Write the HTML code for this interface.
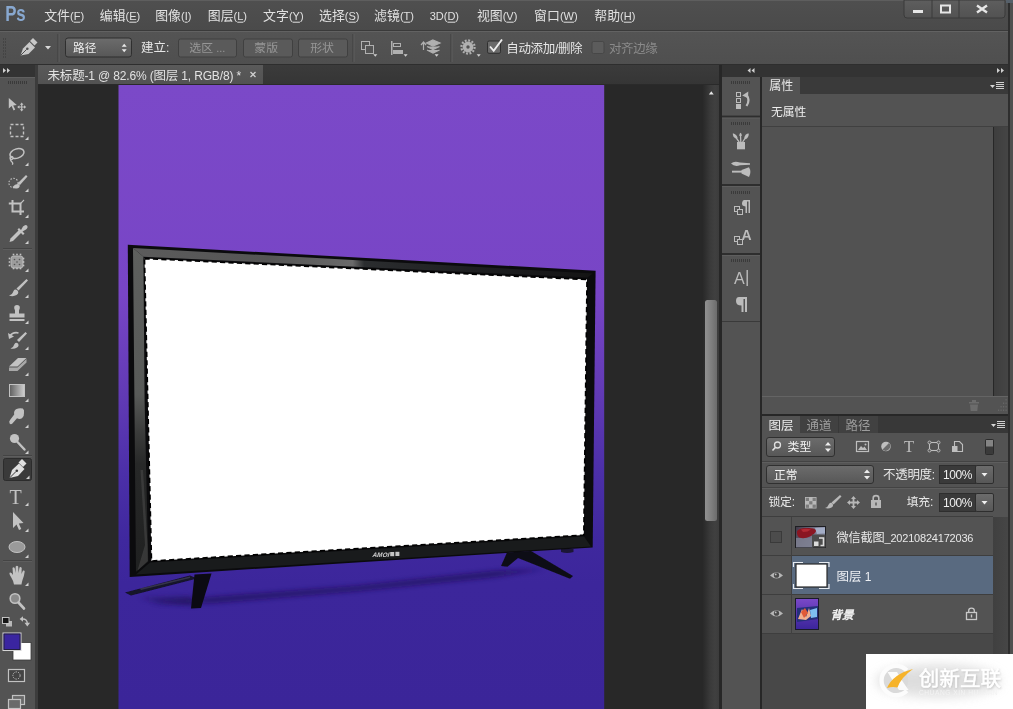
<!DOCTYPE html>
<html lang="zh"><head><meta charset="utf-8"><title>Photoshop</title>
<style>
html,body{margin:0;padding:0;background:#535353;}
body{width:1013px;height:709px;position:relative;overflow:hidden;font-family:"Liberation Sans","Noto Sans CJK SC",sans-serif;}
#app div{position:absolute;}
#ov{position:absolute;left:0;top:0;will-change:transform;}
</style></head><body>
<div id="app">
<div style="left:0px;top:0px;width:1013px;height:709px;background:#535353;"></div>
<div style="left:0px;top:0px;width:1013px;height:31px;background:linear-gradient(#4f4f4f,#4a4a4a);"></div>
<div style="left:0px;top:0px;width:1013px;height:1px;background:#5e5e5e;"></div>
<div style="left:0px;top:31px;width:1008px;height:33px;background:linear-gradient(#545454,#4f4f4f);"></div>
<div style="left:0px;top:30px;width:1013px;height:1px;background:#3a3a3a;"></div>
<div style="left:0px;top:31px;width:1008px;height:1px;background:#626262;"></div>
<div style="left:0px;top:64px;width:1013px;height:1px;background:#2e2e2e;"></div>
<div style="left:1008px;top:2px;width:1.7px;height:707px;background:#2e2e2e;"></div>
<div style="left:1009.7px;top:0px;width:3.3px;height:709px;background:#4f4f4f;"></div>
<div style="left:1006px;top:0px;width:7px;height:3px;background:#56606a;"></div>
<div style="left:35px;top:65px;width:685px;height:644px;background:#282828;"></div>
<div style="left:35px;top:65px;width:3.4px;height:644px;background:#3c3c3c;"></div>
<div style="left:38px;top:65px;width:681.2px;height:20px;background:linear-gradient(#3b3b3b,#353535);"></div>
<div style="left:38.4px;top:65px;width:225px;height:19px;background:linear-gradient(#5a5a5a,#525252);"></div>
<div style="left:38px;top:84px;width:681.2px;height:1px;background:#2a2a2a;"></div>
<div style="left:0px;top:65px;width:35px;height:12px;background:#333333;"></div>
<div style="left:0px;top:77px;width:35px;height:632px;background:#535353;"></div>
<div style="left:0px;top:77px;width:35px;height:1px;background:#606060;"></div>
<div style="left:703px;top:85px;width:16.3px;height:624px;background:linear-gradient(90deg,#292929,#3a3a3a 45%,#404040 75%,#3c3c3c);"></div>
<div style="left:705px;top:300px;width:12.2px;height:220.7px;background:linear-gradient(90deg,#919191,#7e7e7e 55%,#6c6c6c);border-radius:2.5px;"></div>
<div style="left:719.2px;top:65px;width:288.8px;height:644px;background:#272727;"></div>
<div style="left:722px;top:65px;width:286px;height:12px;background:#333333;"></div>
<div style="left:722px;top:77px;width:38px;height:632px;background:#535353;"></div>
<div style="left:762px;top:77px;width:246px;height:17px;background:#3a3a3a;"></div>
<div style="left:762px;top:77px;width:38px;height:17px;background:#535353;"></div>
<div style="left:762px;top:94px;width:246px;height:33px;background:#535353;"></div>
<div style="left:762px;top:126px;width:246px;height:1px;background:#404040;"></div>
<div style="left:762px;top:127px;width:231px;height:269px;background:#525252;"></div>
<div style="left:993.5px;top:127px;width:14.5px;height:269px;background:linear-gradient(90deg,#3e3e3e,#454545);"></div>
<div style="left:762px;top:396px;width:246px;height:1px;background:#646464;"></div>
<div style="left:762px;top:397px;width:246px;height:17px;background:#535353;"></div>
<div style="left:762px;top:416px;width:246px;height:17px;background:#383838;"></div>
<div style="left:762px;top:416px;width:38px;height:17px;background:#535353;"></div>
<div style="left:800px;top:416px;width:38px;height:17px;background:#414141;"></div>
<div style="left:839px;top:416px;width:39px;height:17px;background:#414141;"></div>
<div style="left:762px;top:433px;width:246px;height:84px;background:#535353;"></div>
<div style="left:762px;top:461px;width:246px;height:1px;background:#434343;"></div>
<div style="left:762px;top:462px;width:246px;height:1px;background:#5e5e5e;"></div>
<div style="left:762px;top:487px;width:246px;height:1px;background:#434343;"></div>
<div style="left:762px;top:488px;width:246px;height:1px;background:#5e5e5e;"></div>
<div style="left:762px;top:517px;width:231px;height:192px;background:#484848;"></div>
<div style="left:993.2px;top:517px;width:14.8px;height:192px;background:linear-gradient(90deg,#404040,#464646);"></div>
<div style="left:762px;top:517px;width:231px;height:39px;background:#535353;"></div>
<div style="left:762px;top:556px;width:231px;height:39px;background:#535353;"></div>
<div style="left:792px;top:556px;width:201px;height:39px;background:#596a80;"></div>
<div style="left:762px;top:595px;width:231px;height:39px;background:#535353;"></div>
<div style="left:762px;top:516px;width:231px;height:1px;background:#3e3e3e;"></div>
<div style="left:762px;top:555px;width:231px;height:1px;background:#3e3e3e;"></div>
<div style="left:762px;top:594px;width:231px;height:1px;background:#3e3e3e;"></div>
<div style="left:762px;top:633px;width:231px;height:1px;background:#3e3e3e;"></div>
<div style="left:791px;top:517px;width:1px;height:117px;background:#404040;"></div>
</div>
<svg id="ov" width="1013" height="709" viewBox="0 0 1013 709">
<defs>
<linearGradient id="docg" x1="0" y1="85" x2="0" y2="709" gradientUnits="userSpaceOnUse">
<stop offset="0" stop-color="#7b49c8"/><stop offset="0.3365" stop-color="#7845c6"/><stop offset="0.4968" stop-color="#613ab5"/><stop offset="0.625" stop-color="#4b2fa8"/><stop offset="0.729" stop-color="#3f289e"/><stop offset="0.80" stop-color="#3c269b"/><stop offset="1" stop-color="#3b2599"/></linearGradient>
<filter id="bl4" x="-20%" y="-100%" width="140%" height="300%"><feGaussianBlur stdDeviation="2.5"/></filter>
<filter id="bl1" x="-10%" y="-30%" width="120%" height="160%"><feGaussianBlur stdDeviation="0.5"/></filter>
<filter id="bl2" x="-20%" y="-100%" width="140%" height="300%"><feGaussianBlur stdDeviation="1.5"/></filter>
<linearGradient id="bezL" x1="0" y1="245" x2="0" y2="577" gradientUnits="userSpaceOnUse"><stop offset="0" stop-color="#5e605e"/><stop offset="0.45" stop-color="#585a58"/><stop offset="0.56" stop-color="#3c3d3c"/><stop offset="0.66" stop-color="#272828"/><stop offset="1" stop-color="#1f2020"/></linearGradient>
<linearGradient id="bezT" x1="128" y1="0" x2="596" y2="0" gradientUnits="userSpaceOnUse"><stop offset="0" stop-color="#5c5c5c"/><stop offset="0.3" stop-color="#555"/><stop offset="0.48" stop-color="#6a6a6a"/><stop offset="0.505" stop-color="#2b2d2f"/><stop offset="0.75" stop-color="#1d1e20"/><stop offset="1" stop-color="#141414"/></linearGradient>

<linearGradient id="wc" x1="0" y1="0" x2="0" y2="1"><stop offset="0" stop-color="#5e5e5e"/><stop offset="1" stop-color="#525252"/></linearGradient>
<linearGradient id="btn" x1="0" y1="0" x2="0" y2="1"><stop offset="0" stop-color="#6c6c6c"/><stop offset="1" stop-color="#575757"/></linearGradient>
<linearGradient id="gt" x1="0" y1="0" x2="1" y2="0"><stop offset="0" stop-color="#5e5e5e"/><stop offset="1" stop-color="#d0d0d0"/></linearGradient>
<linearGradient id="th1" x1="0" y1="0" x2="1" y2="0.4"><stop offset="0" stop-color="#3e3544"/><stop offset="0.45" stop-color="#6a6678"/><stop offset="1" stop-color="#929ab2"/></linearGradient>
<linearGradient id="th3" x1="0" y1="0" x2="0" y2="1"><stop offset="0" stop-color="#7b49c9"/><stop offset="0.55" stop-color="#5533ad"/><stop offset="1" stop-color="#3b259b"/></linearGradient>
<filter id="wb" x="-30%" y="-50%" width="160%" height="200%"><feGaussianBlur stdDeviation="6"/></filter><filter id="ws" x="-10%" y="-20%" width="120%" height="140%"><feGaussianBlur stdDeviation="0.9"/></filter>
</defs>
<rect x="118.5" y="85" width="485.7" height="624" fill="url(#docg)" />
<path d="M150 603 L213 597 L357 586 L495 571 L545 569 L495 577 L357 591 L213 603 Z" fill="#1a0f55" filter="url(#bl4)" opacity="0.7"/>
<path d="M140 598 L190 596 L196 606 L160 603 Z" fill="#20125c" filter="url(#bl4)" opacity="0.55"/>
<path d="M125 592.5 L190 575.5 L197 578.5 L131 595.5 Z" fill="#14122a" filter="url(#bl1)"/>
<path d="M140 588.5 L190 576.5 L190 578 L141 590 Z" fill="#4a4860" opacity="0.6"/>
<path d="M194.5 574.5 L211.5 573.5 L201 608 L191 608.5 Z" fill="#0b0a12" />
<path d="M507 552.5 L531 551 L573 576 L570 578.8 L518 558 L507.5 566.8 L501 566 Z" fill="#0e0d16" filter="url(#bl1)"/>
<path d="M561 549 H573.5 V552 Q567 554 561 552 Z" fill="#1c1636" />
<path d="M127.8 244.8 L595.6 270.7 L592.7 547.4 L129.7 576.9 Z" fill="#0b0b0d" />
<path d="M133 247.9 L592.5 273.4 L587.5 277.6 L143.4 256.7 Z" fill="url(#bezT)" />
<path d="M133 247.9 L143.4 256.7 L144.6 400 L148.2 561.5 L136 571.8 Z" fill="url(#bezL)" />
<path d="M140.5 470 L143 470 L147.5 545 L147.8 561 L137.5 570.5 L145 545 Z" fill="#4a4b4b" opacity="0.55"/>
<path d="M150 562.5 L584 536.5 L591 546.5 L136 574.5 Z" fill="#191b1c" />
<path d="M144.5 258.6 L587 279.6 L583.8 535 L151.5 561 Z" fill="#ffffff" stroke="#000" stroke-width="1.6" stroke-dasharray="5.2 3.2"/>
<g fill="#d0d0d0" font-family="Liberation Sans" transform="translate(372 557.3) skewX(-18) translate(-372 -557.3)" aria-label="AMOI"><text xml:space="preserve" x="372.00" y="557.30" font-size="6.40" font-weight="bold">AMOI</text></g>
<rect x="390.2" y="552" width="4" height="4.2" fill="#c4c4c4" />
<rect x="395.4" y="551.8" width="4" height="4.2" fill="#c4c4c4" />
<text transform="translate(5.3 21.3) scale(0.79 1)" font-family="Liberation Sans" font-weight="bold" font-size="21.3" fill="#88a8d0" letter-spacing="-0.4">Ps</text>
<g fill="#e0e0e0" font-family="'Liberation Sans','Noto Sans CJK SC',sans-serif" aria-label="文件(F)"><text x="44.20" y="20.10" font-size="12.90">文件</text><rect x="73.66" y="21.70" width="6.72" height="1" /><text xml:space="preserve" x="70.00" y="20.10" font-size="11.00" font-weight="normal">(F)</text></g>
<g fill="#e0e0e0" font-family="'Liberation Sans','Noto Sans CJK SC',sans-serif" aria-label="编辑(E)"><text x="99.80" y="20.10" font-size="12.90">编辑</text><rect x="129.26" y="21.70" width="7.34" height="1" /><text xml:space="preserve" x="125.60" y="20.10" font-size="11.00" font-weight="normal">(E)</text></g>
<g fill="#e0e0e0" font-family="'Liberation Sans','Noto Sans CJK SC',sans-serif" aria-label="图像(I)"><text x="155.20" y="20.10" font-size="12.90">图像</text><rect x="184.66" y="21.70" width="3.06" height="1" /><text xml:space="preserve" x="181.00" y="20.10" font-size="11.00" font-weight="normal">(I)</text></g>
<g fill="#e0e0e0" font-family="'Liberation Sans','Noto Sans CJK SC',sans-serif" aria-label="图层(L)"><text x="207.80" y="20.10" font-size="12.90">图层</text><rect x="237.26" y="21.70" width="6.12" height="1" /><text xml:space="preserve" x="233.60" y="20.10" font-size="11.00" font-weight="normal">(L)</text></g>
<g fill="#e0e0e0" font-family="'Liberation Sans','Noto Sans CJK SC',sans-serif" aria-label="文字(Y)"><text x="263.10" y="20.10" font-size="12.90">文字</text><rect x="292.56" y="21.70" width="7.34" height="1" /><text xml:space="preserve" x="288.90" y="20.10" font-size="11.00" font-weight="normal">(Y)</text></g>
<g fill="#e0e0e0" font-family="'Liberation Sans','Noto Sans CJK SC',sans-serif" aria-label="选择(S)"><text x="319.00" y="20.10" font-size="12.90">选择</text><rect x="348.46" y="21.70" width="7.34" height="1" /><text xml:space="preserve" x="344.80" y="20.10" font-size="11.00" font-weight="normal">(S)</text></g>
<g fill="#e0e0e0" font-family="'Liberation Sans','Noto Sans CJK SC',sans-serif" aria-label="滤镜(T)"><text x="374.10" y="20.10" font-size="12.90">滤镜</text><rect x="403.56" y="21.70" width="6.72" height="1" /><text xml:space="preserve" x="399.90" y="20.10" font-size="11.00" font-weight="normal">(T)</text></g>
<g fill="#e0e0e0" font-family="Liberation Sans" aria-label="3D(D)"><rect x="447.42" y="21.70" width="7.94" height="1" /><text xml:space="preserve" x="429.70" y="20.10" font-size="11.00" font-weight="normal">3D(D)</text></g>
<g fill="#e0e0e0" font-family="'Liberation Sans','Noto Sans CJK SC',sans-serif" aria-label="视图(V)"><text x="476.90" y="20.10" font-size="12.90">视图</text><rect x="506.36" y="21.70" width="7.34" height="1" /><text xml:space="preserve" x="502.70" y="20.10" font-size="11.00" font-weight="normal">(V)</text></g>
<g fill="#e0e0e0" font-family="'Liberation Sans','Noto Sans CJK SC',sans-serif" aria-label="窗口(W)"><text x="534.10" y="20.10" font-size="12.90">窗口</text><rect x="563.56" y="21.70" width="10.38" height="1" /><text xml:space="preserve" x="559.90" y="20.10" font-size="11.00" font-weight="normal">(W)</text></g>
<g fill="#e0e0e0" font-family="'Liberation Sans','Noto Sans CJK SC',sans-serif" aria-label="帮助(H)"><text x="594.30" y="20.10" font-size="12.90">帮助</text><rect x="623.76" y="21.70" width="7.94" height="1" /><text xml:space="preserve" x="620.10" y="20.10" font-size="11.00" font-weight="normal">(H)</text></g>
<path d="M904 0 H1005 V15 Q1005 18 1002 18 H907 Q904 18 904 15 Z" fill="url(#wc)" stroke="#3a3a3a" stroke-width="1"/>
<rect x="931.5" y="0" width="1" height="18" fill="#3a3a3a" />
<rect x="958.5" y="0" width="1" height="18" fill="#3a3a3a" />
<rect x="913" y="10" width="10" height="3" fill="#e6e6e6" />
<rect x="941" y="5.5" width="9" height="7" fill="none" stroke="#e6e6e6" stroke-width="2"/>
<path d="M977 5.5 L987 12.5 M987 5.5 L977 12.5" fill="none" stroke="#e6e6e6" stroke-width="2.4"/>
<rect x="3" y="38" width="1" height="2" fill="#444" />
<rect x="5" y="38" width="1" height="2" fill="#444" />
<rect x="3" y="41" width="1" height="2" fill="#444" />
<rect x="5" y="41" width="1" height="2" fill="#444" />
<rect x="3" y="44" width="1" height="2" fill="#444" />
<rect x="5" y="44" width="1" height="2" fill="#444" />
<rect x="3" y="47" width="1" height="2" fill="#444" />
<rect x="5" y="47" width="1" height="2" fill="#444" />
<rect x="3" y="50" width="1" height="2" fill="#444" />
<rect x="5" y="50" width="1" height="2" fill="#444" />
<rect x="3" y="53" width="1" height="2" fill="#444" />
<rect x="5" y="53" width="1" height="2" fill="#444" />
<rect x="3" y="56" width="1" height="2" fill="#444" />
<rect x="5" y="56" width="1" height="2" fill="#444" />
<path d="M20.5 55.5 L23 48.5 L29.5 42 L35 47.5 L28.5 54 Z" fill="#c8c8c8" />
<path d="M30 41 L33 38 L37.5 42.5 L34.5 45.5 Z" fill="#c8c8c8" />
<path d="M20.5 55.5 L26.5 49.5" fill="none" stroke="#4f4f4f" stroke-width="1"/>
<circle cx="27.3" cy="48.7" r="1.3" fill="#4f4f4f"/>
<path d="M45 46 L51 46 L48 49.5 Z" fill="#d8d8d8" />
<rect x="57.5" y="34" width="1" height="28" fill="#3f3f3f" />
<rect x="58.5" y="34" width="1" height="28" fill="#5f5f5f" />
<rect x="65.5" y="38" width="66" height="19" rx="2.5" fill="url(#btn)" stroke="#2f2f2f"/>
<g fill="#f0f0f0" font-family="'Liberation Sans','Noto Sans CJK SC',sans-serif" aria-label="路径"><text x="73.00" y="52.30" font-size="11.70">路径</text></g>
<path d="M121.7 46.7 L126.7 46.7 L124.2 43.7 Z M121.7 49.3 L126.7 49.3 L124.2 52.3 Z" fill="#e8e8e8" />
<g fill="#e6e6e6" font-family="'Liberation Sans','Noto Sans CJK SC',sans-serif" aria-label="建立:"><text x="141.00" y="52.00" font-size="12.50">建立</text><text xml:space="preserve" x="166.00" y="52.00" font-size="12.00" font-weight="normal">:</text></g>
<rect x="178.5" y="39" width="58" height="18" rx="2" fill="#5a5a5a" stroke="#404040"/>
<g fill="#969696" font-family="'Liberation Sans','Noto Sans CJK SC',sans-serif" aria-label="选区 ..."><text x="189.30" y="52.30" font-size="11.90">选区</text><text xml:space="preserve" x="213.10" y="52.30" font-size="10.95" font-weight="normal"> ...</text></g>
<rect x="243.5" y="39" width="49" height="18" rx="2" fill="#5a5a5a" stroke="#404040"/>
<g fill="#969696" font-family="'Liberation Sans','Noto Sans CJK SC',sans-serif" aria-label="蒙版"><text x="254.30" y="52.30" font-size="11.90">蒙版</text></g>
<rect x="298.5" y="39" width="49" height="18" rx="2" fill="#5a5a5a" stroke="#404040"/>
<g fill="#969696" font-family="'Liberation Sans','Noto Sans CJK SC',sans-serif" aria-label="形状"><text x="310.20" y="52.30" font-size="11.90">形状</text></g>
<rect x="352.5" y="34" width="1" height="28" fill="#3f3f3f" />
<rect x="353.5" y="34" width="1" height="28" fill="#5f5f5f" />
<rect x="361.5" y="41.5" width="8" height="8" fill="none" stroke="#b0b0b0"/><rect x="365.5" y="45.5" width="8" height="8" fill="#555" stroke="#b0b0b0"/>
<path d="M373.3 54.2 L377.3 54.2 L375.3 56.8 Z" fill="#d0d0d0" />
<rect x="391" y="41" width="1.5" height="14" fill="#b0b0b0" />
<rect x="393.5" y="43.5" width="7" height="3" fill="none" stroke="#b0b0b0"/>
<rect x="393" y="50" width="10" height="4" fill="#b0b0b0" />
<path d="M403.6 54.2 L407.6 54.2 L405.6 56.8 Z" fill="#d0d0d0" />
<path d="M421 45 L423.5 42 L426 45 M423.5 42.5 V50" fill="none" stroke="#b0b0b0" stroke-width="1.2"/>
<path d="M433 40 L440 43 L433 46 L426.5 43 Z M427 46.5 L433 49.5 L439.5 46.5 M427 50 L433 53 L439.5 50" fill="#b0b0b0" stroke="#b0b0b0" stroke-width="1.2"/>
<path d="M434.6 54.2 L438.6 54.2 L436.6 56.8 Z" fill="#d0d0d0" />
<rect x="450.5" y="34" width="1" height="28" fill="#3f3f3f" />
<rect x="451.5" y="34" width="1" height="28" fill="#5f5f5f" />
<circle cx="468" cy="47" r="5.4" fill="#b0b0b0"/><circle cx="468" cy="47" r="6.6" fill="none" stroke="#b0b0b0" stroke-width="2.2" stroke-dasharray="1.9 1.556"/><circle cx="468" cy="47" r="1.7" fill="#525252"/>
<path d="M476.7 54.2 L480.7 54.2 L478.7 56.8 Z" fill="#d0d0d0" />
<rect x="487.5" y="41" width="13" height="12.3" rx="1.5" fill="#6a6a6a" stroke="#303030"/>
<path d="M490 46.5 L493.7 50.8 L502 39.5" fill="none" stroke="#eeeeee" stroke-width="1.9"/>
<g fill="#e6e6e6" font-family="'Liberation Sans','Noto Sans CJK SC',sans-serif" aria-label="自动添加/删除"><text x="506.30" y="52.50" font-size="12.50" letter-spacing="-0.35">自动添加</text><text xml:space="preserve" x="554.90" y="52.50" font-size="12.00" font-weight="normal" letter-spacing="-0.35">/</text><text x="557.88" y="52.50" font-size="12.50" letter-spacing="-0.35">删除</text></g>
<rect x="592" y="41.5" width="12" height="12" rx="1.5" fill="#5c5c5c" stroke="#474747"/>
<g fill="#8a8a8a" font-family="'Liberation Sans','Noto Sans CJK SC',sans-serif" aria-label="对齐边缘"><text x="609.00" y="52.50" font-size="12.50" letter-spacing="-0.4">对齐边缘</text></g>
<g fill="#e2e2e2" font-family="'Liberation Sans','Noto Sans CJK SC',sans-serif" aria-label="未标题-1 @ 82.6% (图层 1, RGB/8) *"><text x="47.50" y="80.00" font-size="12.50" letter-spacing="-0.16">未标题</text><text xml:space="preserve" x="84.52" y="80.00" font-size="12.00" font-weight="normal" letter-spacing="-0.16">-1 @ 82.6% (</text><text x="153.48" y="80.00" font-size="12.50" letter-spacing="-0.16">图层</text><text xml:space="preserve" x="178.16" y="80.00" font-size="12.00" font-weight="normal" letter-spacing="-0.16"> 1, RGB/8) *</text></g>
<path d="M250.5 72 L255.5 77 M255.5 72 L250.5 77" fill="none" stroke="#d0d0d0" stroke-width="1.3"/>
<path d="M3 68 L6 70.5 L3 73 Z M7 68 L10 70.5 L7 73 Z" fill="#d0d0d0" />
<path d="M750.5 68 L747.5 70.5 L750.5 73 Z M754.5 68 L751.5 70.5 L754.5 73 Z" fill="#d0d0d0" />
<path d="M997 68 L1000 70.5 L997 73 Z M1001 68 L1004 70.5 L1001 73 Z" fill="#d0d0d0" />
<path d="M708.9 94.4 L713.7 94.4 L711.3 91.2 Z" fill="#e6e6e6" />
<rect x="8" y="81" width="1" height="3" fill="#3a3a3a" />
<rect x="10" y="81" width="1" height="3" fill="#3a3a3a" />
<rect x="12" y="81" width="1" height="3" fill="#3a3a3a" />
<rect x="14" y="81" width="1" height="3" fill="#3a3a3a" />
<rect x="16" y="81" width="1" height="3" fill="#3a3a3a" />
<rect x="18" y="81" width="1" height="3" fill="#3a3a3a" />
<rect x="20" y="81" width="1" height="3" fill="#3a3a3a" />
<rect x="22" y="81" width="1" height="3" fill="#3a3a3a" />
<rect x="24" y="81" width="1" height="3" fill="#3a3a3a" />
<rect x="26" y="81" width="1" height="3" fill="#3a3a3a" />
<rect x="3" y="248" width="29" height="1" fill="#444" />
<rect x="3" y="249" width="29" height="1" fill="#5d5d5d" />
<rect x="3" y="455" width="29" height="1" fill="#444" />
<rect x="3" y="456" width="29" height="1" fill="#5d5d5d" />
<rect x="3" y="560" width="29" height="1" fill="#444" />
<rect x="3" y="561" width="29" height="1" fill="#5d5d5d" />
<path d="M8.8 98 L8.8 108.6 L11.6 106 L13.6 110.4 L15.2 109.6 L13.2 105.4 L16.8 105.1 Z" fill="#c2c2c2" />
<path d="M21.7 102.5 L23.5 104.7 H22.3 V106.4 H24 V105.2 L26.2 107 L24 108.8 V107.6 H22.3 V109.3 H23.5 L21.7 111.5 L19.9 109.3 H21.1 V107.6 H19.4 V108.8 L17.2 107 L19.4 105.2 V106.4 H21.1 V104.7 H19.9 Z" fill="#c2c2c2" />
<rect x="10.5" y="124.5" width="13" height="12" fill="none" stroke="#c2c2c2" stroke-width="1.4" stroke-dasharray="3 2"/>
<path d="M25 140 L28.5 140 L28.5 136.5 Z" fill="#d0d0d0" />
<ellipse cx="17" cy="153.5" rx="7.2" ry="4.6" fill="none" stroke="#c2c2c2" stroke-width="1.5" transform="rotate(-18 17 153.5)"/>
<path d="M11 157 Q9.5 160 12 162 Q13.5 163.5 12 164.5" fill="none" stroke="#c2c2c2" stroke-width="1.3"/>
<circle cx="11.5" cy="158" r="1.6" fill="none" stroke="#c2c2c2" stroke-width="1.1"/>
<path d="M25 166 L28.5 166 L28.5 162.5 Z" fill="#d0d0d0" />
<circle cx="13.5" cy="183" r="4.6" fill="none" stroke="#c2c2c2" stroke-width="1.1" stroke-dasharray="1.5 1.5"/>
<path d="M26 175 L27.5 176.5 L20 185 L17.5 183.5 Z" fill="#c2c2c2" />
<path d="M12.5 187 Q16 183 19.5 184.5 Q20.5 187.5 17 188.5 Q14 189 12.5 187 Z" fill="#c2c2c2" />
<path d="M25 192 L28.5 192 L28.5 188.5 Z" fill="#d0d0d0" />
<path d="M12.5 200 V211.5 H24 M8.8 203.6 H20.5 V215" fill="none" stroke="#c2c2c2" stroke-width="2"/>
<path d="M20.5 203.6 L24 200" fill="none" stroke="#c2c2c2" stroke-width="1.1"/>
<path d="M25 218 L28.5 218 L28.5 214.5 Z" fill="#d0d0d0" />
<path d="M9.5 242 L10.5 238.5 L19 230 L21.5 232.5 L13 241 Z" fill="#c2c2c2" />
<path d="M19 228 L21 230 L23 226.5 Q25.5 224 27 225.5 Q28.5 227.5 26 229.5 L22.5 231.5 L24.5 233.5 L23 235 L17.5 229.5 Z" fill="#c2c2c2" />
<path d="M25 244 L28.5 244 L28.5 240.5 Z" fill="#d0d0d0" />
<rect x="11" y="256" width="12" height="12" rx="2.5" fill="#9c9c9c" stroke="#c2c2c2" stroke-width="0.8"/>
<rect x="12.7" y="253.7" width="1.6" height="1.6" fill="#c2c2c2" />
<rect x="16.2" y="253.7" width="1.6" height="1.6" fill="#c2c2c2" />
<rect x="19.7" y="253.7" width="1.6" height="1.6" fill="#c2c2c2" />
<rect x="12.7" y="267.7" width="1.6" height="1.6" fill="#c2c2c2" />
<rect x="16.2" y="267.7" width="1.6" height="1.6" fill="#c2c2c2" />
<rect x="19.7" y="267.7" width="1.6" height="1.6" fill="#c2c2c2" />
<rect x="8.7" y="257.7" width="1.6" height="1.6" fill="#c2c2c2" />
<rect x="8.7" y="261.2" width="1.6" height="1.6" fill="#c2c2c2" />
<rect x="8.7" y="264.7" width="1.6" height="1.6" fill="#c2c2c2" />
<rect x="22.7" y="257.7" width="1.6" height="1.6" fill="#c2c2c2" />
<rect x="22.7" y="261.2" width="1.6" height="1.6" fill="#c2c2c2" />
<rect x="22.7" y="264.7" width="1.6" height="1.6" fill="#c2c2c2" />
<circle cx="14.5" cy="259.5" r="0.8" fill="#555"/><circle cx="19.5" cy="259.5" r="0.8" fill="#555"/><circle cx="14.5" cy="264.5" r="0.8" fill="#555"/><circle cx="19.5" cy="264.5" r="0.8" fill="#555"/><circle cx="17" cy="262" r="0.8" fill="#555"/>
<path d="M25 272 L28.5 272 L28.5 268.5 Z" fill="#d0d0d0" />
<path d="M26.5 279 L28 280.5 L18.5 290.5 L16.5 288.5 Z" fill="#c2c2c2" />
<path d="M9 295.5 Q12.5 294.5 13.5 291 Q15 288.5 17.5 290.5 Q19.5 293 16.5 295 Q13 297 9 295.5 Z" fill="#c2c2c2" />
<path d="M25 298 L28.5 298 L28.5 294.5 Z" fill="#d0d0d0" />
<path d="M14.5 306 Q17 304 19.5 306 Q20.5 308 19 310.5 L19 313.5 H24.5 V317.5 H9.5 V313.5 H15 L15 310.5 Q13.5 308 14.5 306 Z" fill="#c2c2c2" />
<rect x="9.5" y="319" width="15" height="2" fill="#c2c2c2" />
<path d="M25 324 L28.5 324 L28.5 320.5 Z" fill="#d0d0d0" />
<path d="M25.5 332 L27 333.5 L19 342 L17 340 Z" fill="#c2c2c2" />
<path d="M10.5 348.5 Q13.5 347.5 14.5 344 Q16 342 18 343.5 Q19.5 346 17 347.5 Q14 349.5 10.5 348.5 Z" fill="#c2c2c2" />
<path d="M9.5 336.5 Q13 331.5 18.5 333" fill="none" stroke="#c2c2c2" stroke-width="1.6"/>
<path d="M8 333 L9 339 L14 336.5 Z" fill="#c2c2c2" />
<path d="M25 350 L28.5 350 L28.5 346.5 Z" fill="#d0d0d0" />
<path d="M9 366.5 L18 358 H26.5 L17.5 366.5 Z" fill="#c2c2c2" />
<path d="M9 367.5 H17.5 L26.5 359 V362.5 L17.5 371 H9 Z" fill="#a8a8a8" />
<path d="M25 376 L28.5 376 L28.5 372.5 Z" fill="#d0d0d0" />
<rect x="9.5" y="384.5" width="15" height="12" fill="url(#gt)" stroke="#c2c2c2"/>
<path d="M25 402 L28.5 402 L28.5 398.5 Z" fill="#d0d0d0" />
<path d="M9.6 423.5 Q8.6 421.5 10.2 419.8 L14.2 414.5 Q13.5 411 16 409.3 Q19.5 407.5 22.8 408.6 Q24.6 410 24 413 Q24.3 416.5 22 418.2 Q19.5 419.6 17 418.2 L12.4 423.6 Q10.8 424.8 9.6 423.5 Z" fill="#c2c2c2" />
<path d="M25 428 L28.5 428 L28.5 424.5 Z" fill="#d0d0d0" />
<circle cx="14.5" cy="438.5" r="4.6" fill="#c2c2c2"/>
<path d="M17.5 442 L24.5 449.5" fill="none" stroke="#c2c2c2" stroke-width="2.4" stroke-linecap="round"/>
<path d="M25 454 L28.5 454 L28.5 450.5 Z" fill="#d0d0d0" />
<rect x="3.5" y="458.5" width="28" height="22" rx="2" fill="#3a3a3a" stroke="#2c2c2c"/>
<path d="M9.5 478 L12 470 L19 463.5 L24.5 469 L18 476 Z" fill="#e0e0e0" />
<path d="M18.5 462.5 L22 459 L26.5 463.5 L23 467 Z" fill="#e0e0e0" />
<path d="M9.5 478 L16 471.5" fill="none" stroke="#3a3a3a" stroke-width="1"/>
<circle cx="16.8" cy="470.7" r="1.3" fill="#3a3a3a"/>
<path d="M26 479 L29.5 479 L29.5 475.5 Z" fill="#d0d0d0" />
<g fill="#c2c2c2" font-family="Liberation Serif" aria-label="T"><text xml:space="preserve" x="9.50" y="503.50" font-size="20.00" font-weight="normal">T</text></g>
<path d="M25 506 L28.5 506 L28.5 502.5 Z" fill="#d0d0d0" />
<path d="M13 512 L13 528 L16.5 524.5 L19 530 L21.3 529 L18.8 523.5 L23.5 523 Z" fill="#c2c2c2" />
<path d="M25 532 L28.5 532 L28.5 528.5 Z" fill="#d0d0d0" />
<ellipse cx="17" cy="547" rx="8" ry="5.5" fill="#9a9a9a" stroke="#c2c2c2" stroke-width="1"/>
<path d="M25 558 L28.5 558 L28.5 554.5 Z" fill="#d0d0d0" />
<path d="M11 577 Q8.5 573 10 572.5 Q11.5 572 13 575 L12.5 568 Q13.5 566.5 14.7 568 L15.5 573 L15.7 566.5 Q17 565 18.2 566.5 L18.5 573 L19.5 567.5 Q20.8 566.5 21.7 568 L21.5 574 L23 570.5 Q24.5 570 24.7 571.5 Q24 577 22.5 580 Q21.5 583.5 21.5 584.5 H14 Q13.5 581 11 577 Z" fill="#c2c2c2" />
<path d="M25 586 L28.5 586 L28.5 582.5 Z" fill="#d0d0d0" />
<circle cx="15" cy="598.5" r="4.8" fill="#8a8a8a" stroke="#c2c2c2" stroke-width="1.6"/>
<path d="M18.5 602.5 L24 608.5" fill="none" stroke="#c2c2c2" stroke-width="2.6" stroke-linecap="round"/>
<rect x="6" y="621" width="6" height="5.5" fill="#b8b8b8" />
<rect x="2.5" y="617.5" width="6.5" height="6" fill="#151515" stroke="#d0d0d0" stroke-width="0.9"/>
<path d="M22 619 Q27.3 618.6 27.3 623.5" fill="none" stroke="#c2c2c2" stroke-width="1.4"/>
<path d="M19.6 619 L23 616.2 L23 621.8 Z M27.3 626.4 L24.5 622.8 L30.1 622.8 Z" fill="#c2c2c2" />
<rect x="13" y="642.5" width="18" height="17.5" fill="#ffffff" stroke="#3a3a3a" stroke-width="0.8"/>
<rect x="3" y="633" width="18" height="17.5" fill="#3a25a0" stroke="#d6d6d6" stroke-width="1"/>
<rect x="4" y="634" width="16" height="15.5" fill="none" stroke="#1e1e2a" stroke-width="0.8"/>
<rect x="8.5" y="669.5" width="16" height="12" fill="#444" stroke="#c2c2c2" stroke-width="1.2"/><circle cx="16.5" cy="675.5" r="3.6" fill="none" stroke="#c2c2c2" stroke-width="1" stroke-dasharray="1.4 1.2"/>
<rect x="12.5" y="695.5" width="12" height="9" fill="#6a6a6a" stroke="#c2c2c2" stroke-width="1.2"/><rect x="8.5" y="699.5" width="12" height="9" fill="#6a6a6a" stroke="#c2c2c2" stroke-width="1.2"/>
<rect x="731" y="81" width="1" height="3" fill="#3a3a3a" />
<rect x="733" y="81" width="1" height="3" fill="#3a3a3a" />
<rect x="735" y="81" width="1" height="3" fill="#3a3a3a" />
<rect x="737" y="81" width="1" height="3" fill="#3a3a3a" />
<rect x="739" y="81" width="1" height="3" fill="#3a3a3a" />
<rect x="741" y="81" width="1" height="3" fill="#3a3a3a" />
<rect x="743" y="81" width="1" height="3" fill="#3a3a3a" />
<rect x="745" y="81" width="1" height="3" fill="#3a3a3a" />
<rect x="747" y="81" width="1" height="3" fill="#3a3a3a" />
<rect x="749" y="81" width="1" height="3" fill="#3a3a3a" />
<rect x="736.5" y="92.5" width="4" height="4" fill="none" stroke="#bcbcbc"/><rect x="736.5" y="98.5" width="4" height="4" fill="none" stroke="#bcbcbc"/><rect x="736" y="104" width="5" height="5" fill="#bcbcbc"/>
<path d="M746.5 106 Q750.5 100 746.5 95" fill="none" stroke="#bcbcbc" stroke-width="2.2"/>
<path d="M742.2 95.6 L748.3 91.6 L748 98.2 Z" fill="#bcbcbc" />
<rect x="722" y="115.6" width="38" height="2" fill="#2e2e2e" />
<rect x="722" y="117.6" width="38" height="1" fill="#5e5e5e" />
<rect x="731" y="122" width="1" height="3" fill="#3a3a3a" />
<rect x="733" y="122" width="1" height="3" fill="#3a3a3a" />
<rect x="735" y="122" width="1" height="3" fill="#3a3a3a" />
<rect x="737" y="122" width="1" height="3" fill="#3a3a3a" />
<rect x="739" y="122" width="1" height="3" fill="#3a3a3a" />
<rect x="741" y="122" width="1" height="3" fill="#3a3a3a" />
<rect x="743" y="122" width="1" height="3" fill="#3a3a3a" />
<rect x="745" y="122" width="1" height="3" fill="#3a3a3a" />
<rect x="747" y="122" width="1" height="3" fill="#3a3a3a" />
<rect x="749" y="122" width="1" height="3" fill="#3a3a3a" />
<rect x="737" y="142" width="8" height="7.3" fill="#bcbcbc" />
<path d="M739.2 142 L735.6 137.2 M740.8 142 L740.5 135 M742.6 142 L745.6 137.6" fill="none" stroke="#bcbcbc" stroke-width="1.3"/>
<path d="M736.8 138.8 Q732.3 137.2 732.9 133.2 Q736.8 134.3 737.6 137.9 Z" fill="#bcbcbc" />
<path d="M739.1 135.8 Q740.5 129.8 742 135.8 Z" fill="#bcbcbc" />
<path d="M744.2 138.2 Q744.8 133.8 748.8 133.6 Q748.8 137.8 745.7 139.3 Z" fill="#bcbcbc" />
<path d="M731 163.6 Q734 160.4 740 162.5 L750 163.3 L750 164.8 L740 165.3 Q734.5 167.2 731 163.6 Z" fill="#bcbcbc" />
<rect x="732" y="170.7" width="10" height="1.9" fill="#bcbcbc" />
<path d="M741.5 170 L749 167.3 Q751.8 172 749 177 L741.5 173.4 Z" fill="#bcbcbc" />
<rect x="722" y="184" width="38" height="2" fill="#2e2e2e" />
<rect x="722" y="186" width="38" height="1" fill="#5e5e5e" />
<rect x="731" y="191" width="1" height="3" fill="#3a3a3a" />
<rect x="733" y="191" width="1" height="3" fill="#3a3a3a" />
<rect x="735" y="191" width="1" height="3" fill="#3a3a3a" />
<rect x="737" y="191" width="1" height="3" fill="#3a3a3a" />
<rect x="739" y="191" width="1" height="3" fill="#3a3a3a" />
<rect x="741" y="191" width="1" height="3" fill="#3a3a3a" />
<rect x="743" y="191" width="1" height="3" fill="#3a3a3a" />
<rect x="745" y="191" width="1" height="3" fill="#3a3a3a" />
<rect x="747" y="191" width="1" height="3" fill="#3a3a3a" />
<rect x="749" y="191" width="1" height="3" fill="#3a3a3a" />
<rect x="734.5" y="206.5" width="5" height="5" fill="none" stroke="#bcbcbc"/><rect x="737.5" y="209.5" width="5" height="5" fill="#535353" stroke="#bcbcbc"/>
<path d="M744 200 H750 V213 H748.5 V201.5 H747 V213 H745.5 V206.5 Q741.5 206 742 203 Q742.5 200 744 200 Z" fill="#bcbcbc" />
<rect x="734.5" y="236.5" width="5" height="5" fill="none" stroke="#bcbcbc"/><rect x="737.5" y="239.5" width="5" height="5" fill="#535353" stroke="#bcbcbc"/>
<g fill="#bcbcbc" font-family="Liberation Sans" aria-label="A"><text xml:space="preserve" x="741.50" y="240.00" font-size="14.00" font-weight="bold">A</text></g>
<rect x="722" y="253" width="38" height="2" fill="#2e2e2e" />
<rect x="722" y="255" width="38" height="1" fill="#5e5e5e" />
<rect x="731" y="259" width="1" height="3" fill="#3a3a3a" />
<rect x="733" y="259" width="1" height="3" fill="#3a3a3a" />
<rect x="735" y="259" width="1" height="3" fill="#3a3a3a" />
<rect x="737" y="259" width="1" height="3" fill="#3a3a3a" />
<rect x="739" y="259" width="1" height="3" fill="#3a3a3a" />
<rect x="741" y="259" width="1" height="3" fill="#3a3a3a" />
<rect x="743" y="259" width="1" height="3" fill="#3a3a3a" />
<rect x="745" y="259" width="1" height="3" fill="#3a3a3a" />
<rect x="747" y="259" width="1" height="3" fill="#3a3a3a" />
<rect x="749" y="259" width="1" height="3" fill="#3a3a3a" />
<g fill="#bcbcbc" font-family="Liberation Sans" aria-label="A"><text xml:space="preserve" x="734.00" y="284.00" font-size="16.00" font-weight="normal">A</text></g>
<rect x="746.5" y="270" width="1.4" height="16" fill="#bcbcbc" />
<path d="M739 297 H747 V312 H745 V299 H743.5 V312 H741.5 V305.5 Q736 305.5 736 301 Q736 297 739 297 Z" fill="#bcbcbc" />
<rect x="722" y="321" width="38" height="1" fill="#3a3a3a" />
<g fill="#e8e8e8" font-family="'Liberation Sans','Noto Sans CJK SC',sans-serif" aria-label="属性"><text x="769.30" y="89.80" font-size="12.00">属性</text></g>
<g fill="#f0f0f0" font-family="'Liberation Sans','Noto Sans CJK SC',sans-serif" aria-label="无属性"><text x="771.00" y="115.50" font-size="11.80" letter-spacing="-0.1">无属性</text></g>
<path d="M990 85 L995 85 L992.5 88 Z" fill="#d6d6d6" />
<rect x="996" y="82" width="8" height="1" fill="#d0d0d0" />
<rect x="996" y="84" width="8" height="1" fill="#d0d0d0" />
<rect x="996" y="86" width="8" height="1" fill="#d0d0d0" />
<rect x="996" y="88" width="8" height="1" fill="#d0d0d0" />
<path d="M969 402 H979 V403.5 H969 Z M972 400 H976 V402 H972 Z M970 404.5 H978 L977.3 411 H970.7 Z" fill="#6c6c6c" />
<rect x="998.0" y="409.5" width="1.2" height="1.5" fill="#666" />
<rect x="1000.5" y="406.0" width="1.2" height="1.5" fill="#666" />
<rect x="1000.5" y="409.5" width="1.2" height="1.5" fill="#666" />
<rect x="1003.0" y="402.5" width="1.2" height="1.5" fill="#666" />
<rect x="1003.0" y="406.0" width="1.2" height="1.5" fill="#666" />
<rect x="1003.0" y="409.5" width="1.2" height="1.5" fill="#666" />
<rect x="1005.5" y="399.0" width="1.2" height="1.5" fill="#666" />
<rect x="1005.5" y="402.5" width="1.2" height="1.5" fill="#666" />
<rect x="1005.5" y="406.0" width="1.2" height="1.5" fill="#666" />
<rect x="1005.5" y="409.5" width="1.2" height="1.5" fill="#666" />
<g fill="#ececec" font-family="'Liberation Sans','Noto Sans CJK SC',sans-serif" aria-label="图层"><text x="768.50" y="429.50" font-size="12.50">图层</text></g>
<g fill="#9c9c9c" font-family="'Liberation Sans','Noto Sans CJK SC',sans-serif" aria-label="通道"><text x="806.50" y="429.50" font-size="12.50">通道</text></g>
<g fill="#9c9c9c" font-family="'Liberation Sans','Noto Sans CJK SC',sans-serif" aria-label="路径"><text x="845.50" y="429.50" font-size="12.50">路径</text></g>
<path d="M991 424 L996 424 L993.5 427 Z" fill="#d6d6d6" />
<rect x="997" y="421" width="8" height="1" fill="#d0d0d0" />
<rect x="997" y="423" width="8" height="1" fill="#d0d0d0" />
<rect x="997" y="425" width="8" height="1" fill="#d0d0d0" />
<rect x="997" y="427" width="8" height="1" fill="#d0d0d0" />
<rect x="766.5" y="437.5" width="68" height="19" rx="2.5" fill="url(#btn)" stroke="#303030"/>
<circle cx="777.5" cy="445" r="3" fill="none" stroke="#e0e0e0" stroke-width="1.3"/>
<path d="M775.3 447.5 L772.5 450.5" fill="none" stroke="#e0e0e0" stroke-width="1.6"/>
<g fill="#f4f4f4" font-family="'Liberation Sans','Noto Sans CJK SC',sans-serif" aria-label="类型"><text x="787.50" y="451.30" font-size="11.90">类型</text></g>
<path d="M825 445.5 L831 445.5 L828 442 Z M825 448.5 L831 448.5 L828 452 Z" fill="#ececec" />
<rect x="856.5" y="441.5" width="12" height="10" fill="none" stroke="#bebebe" stroke-width="1.2"/>
<path d="M858 450 L861 446 L863 448 L864.5 446.5 L867 450 Z" fill="#bebebe" />
<circle cx="865.5" cy="444.5" r="1" fill="#bebebe"/>
<circle cx="886" cy="446.5" r="4.8" fill="#bebebe"/>
<path d="M882.5 449.5 L889 443 A4.6 4.6 0 0 1 882.5 449.5 Z" fill="#6a6a6a" />
<g fill="#bebebe" font-family="Liberation Serif" aria-label="T"><text xml:space="preserve" x="904.00" y="452.30" font-size="16.50" font-weight="normal">T</text></g>
<rect x="929.5" y="442.5" width="9" height="8" fill="none" stroke="#bebebe" stroke-width="1.1"/>
<circle cx="929.5" cy="442.5" r="1.5" fill="#535353" stroke="#bebebe" stroke-width="0.9"/>
<circle cx="938.5" cy="442.5" r="1.5" fill="#535353" stroke="#bebebe" stroke-width="0.9"/>
<circle cx="929.5" cy="450.5" r="1.5" fill="#535353" stroke="#bebebe" stroke-width="0.9"/>
<circle cx="938.5" cy="450.5" r="1.5" fill="#535353" stroke="#bebebe" stroke-width="0.9"/>
<path d="M954.5 441.5 H959.5 L962.5 444.5 V451.5 H954.5 Z" fill="none" stroke="#bebebe" stroke-width="1.1"/>
<rect x="952" y="446" width="5.5" height="6" fill="#bebebe" />
<rect x="985.5" y="439.5" width="8" height="15" rx="1" fill="#3a3a3a" stroke="#2c2c2c"/>
<rect x="986" y="440" width="7" height="6.5" fill="#848484" />
<rect x="766.5" y="465.5" width="107" height="18" rx="2.5" fill="url(#btn)" stroke="#303030"/>
<g fill="#f4f4f4" font-family="'Liberation Sans','Noto Sans CJK SC',sans-serif" aria-label="正常"><text x="774.00" y="478.80" font-size="11.70">正常</text></g>
<path d="M864 473 L870 473 L867 469.5 Z M864 476 L870 476 L867 479.5 Z" fill="#ececec" />
<g fill="#e8e8e8" font-family="'Liberation Sans','Noto Sans CJK SC',sans-serif" aria-label="不透明度:"><text x="883.00" y="479.00" font-size="12.50" letter-spacing="-0.3">不透明度</text><text xml:space="preserve" x="931.80" y="479.00" font-size="12.00" font-weight="normal" letter-spacing="-0.3">:</text></g>
<rect x="939.5" y="465.5" width="36" height="18" fill="#3a3a3a" stroke="#2e2e2e"/>
<rect x="975.5" y="465.5" width="18" height="18" rx="1.5" fill="url(#btn)" stroke="#2e2e2e"/>
<g fill="#f0f0f0" font-family="Liberation Sans" aria-label="100%"><text xml:space="preserve" x="943.00" y="479.00" font-size="12.00" font-weight="normal" letter-spacing="-0.4">100%</text></g>
<path d="M981.5 473 L987.5 473 L984.5 476.5 Z" fill="#f0f0f0" />
<g fill="#e8e8e8" font-family="'Liberation Sans','Noto Sans CJK SC',sans-serif" aria-label="锁定:"><text x="768.40" y="505.60" font-size="11.90" letter-spacing="-0.2">锁定</text><text xml:space="preserve" x="791.80" y="505.60" font-size="12.00" font-weight="normal" letter-spacing="-0.2">:</text></g>
<rect x="805" y="497" width="11.5" height="11.5" fill="#b8b8b8" />
<rect x="805.8" y="497.8" width="3.2" height="3.2" fill="#7c7c7c" />
<rect x="812.5999999999999" y="497.8" width="3.2" height="3.2" fill="#7c7c7c" />
<rect x="809.1999999999999" y="501.2" width="3.2" height="3.2" fill="#7c7c7c" />
<rect x="805.8" y="504.6" width="3.2" height="3.2" fill="#7c7c7c" />
<rect x="812.5999999999999" y="504.6" width="3.2" height="3.2" fill="#7c7c7c" />
<path d="M840 495 L841.5 496.5 L833.5 504.5 L831.5 502.5 Z" fill="#b8b8b8" />
<path d="M825 508 Q828 507 829 504 Q830.5 502 832.5 503.5 Q834 506 831.5 507.5 Q828.5 509 825 508 Z" fill="#b8b8b8" />
<path d="M853.5 496 L856 499 H854.4 V501.6 H857 V500 L860 502.5 L857 505 V503.4 H854.4 V506 H856 L853.5 509 L851 506 H852.6 V503.4 H850 V505 L847 502.5 L850 500 V501.6 H852.6 V499 H851 Z" fill="#b8b8b8" />
<rect x="871" y="500" width="10" height="8" fill="#b8b8b8" />
<path d="M873.2 500 V498 Q873.2 495.6 876 495.6 Q878.8 495.6 878.8 498 V500" fill="none" stroke="#b8b8b8" stroke-width="1.6"/>
<rect x="875.3" y="502.5" width="1.4" height="3" fill="#535353" />
<g fill="#e8e8e8" font-family="'Liberation Sans','Noto Sans CJK SC',sans-serif" aria-label="填充:"><text x="906.70" y="505.60" font-size="11.80" letter-spacing="-0.2">填充</text><text xml:space="preserve" x="929.90" y="505.60" font-size="12.00" font-weight="normal" letter-spacing="-0.2">:</text></g>
<rect x="939.5" y="493.5" width="36" height="18" fill="#3a3a3a" stroke="#2e2e2e"/>
<rect x="975.5" y="493.5" width="18" height="18" rx="1.5" fill="url(#btn)" stroke="#2e2e2e"/>
<g fill="#f0f0f0" font-family="Liberation Sans" aria-label="100%"><text xml:space="preserve" x="943.00" y="507.00" font-size="12.00" font-weight="normal" letter-spacing="-0.4">100%</text></g>
<path d="M981.5 501 L987.5 501 L984.5 504.5 Z" fill="#f0f0f0" />
<rect x="770.5" y="531.5" width="11" height="11" fill="#4c4c4c" stroke="#3a3a3a"/>
<rect x="795.5" y="526.5" width="30" height="21" fill="url(#th1)" stroke="#1e1e22"/>
<rect x="796" y="538" width="17" height="9.5" fill="#7d7f90" opacity="0.85"/>
<path d="M797 531 Q800 527.5 807 528 Q813 527.5 816.5 530 Q815 534 810 536.5 Q804 539.5 799 537.5 Q796.5 535 797 531 Z" fill="#8a1622" />
<path d="M801 529.5 Q806 528 811 529.5 Q808 532 803 532 Z" fill="#b22a34" />
<path d="M815 528 L825 527.5 L825 533 L817 534 Z" fill="#a3adc6" />
<rect x="812" y="534.5" width="13.5" height="13" fill="#4c4c4c" />
<rect x="814" y="541.5" width="4.5" height="4.5" fill="#dcdcdc" />
<path d="M819 538 H823.5 V545.5 H820.5" fill="none" stroke="#dcdcdc" stroke-width="1.6"/>
<g fill="#e8e8e8" font-family="'Liberation Sans','Noto Sans CJK SC',sans-serif" aria-label="微信截图_20210824172036"><text x="836.50" y="542.30" font-size="12.20" letter-spacing="-0.2">微信截图</text><text xml:space="preserve" x="884.50" y="542.30" font-size="11.00" font-weight="normal" letter-spacing="-0.2">_20210824172036</text></g>
<path d="M770.0 575.5 Q776.5 569.0 783.0 575.5 Q776.5 581.5 770.0 575.5 Z" fill="#b6b6b6" />
<circle cx="776.5" cy="575.2" r="2.6" fill="#4a4a4a"/><circle cx="775.7" cy="574.4" r="0.9" fill="#c0c0c0"/>
<rect x="796" y="564" width="31" height="23" fill="#ffffff" stroke="#2a2a2a" stroke-width="1.2"/>
<path d="M793.5 567 V562.5 H803 M819 562.5 H829 V567 M829 584 V588.5 H819 M803 588.5 H793.5 V584" fill="none" stroke="#e8ecf2" stroke-width="1.2"/>
<g fill="#eef0f4" font-family="'Liberation Sans','Noto Sans CJK SC',sans-serif" aria-label="图层 1"><text x="836.50" y="581.00" font-size="12.50">图层</text><text xml:space="preserve" x="861.50" y="581.00" font-size="12.00" font-weight="normal"> 1</text></g>
<path d="M770.0 613.5 Q776.5 607.0 783.0 613.5 Q776.5 619.5 770.0 613.5 Z" fill="#b6b6b6" />
<circle cx="776.5" cy="613.2" r="2.6" fill="#4a4a4a"/><circle cx="775.7" cy="612.4" r="0.9" fill="#c0c0c0"/>
<rect x="795.5" y="598.5" width="23" height="31" fill="url(#th3)" stroke="#1a1a2a"/>
<path d="M797 608 L818 606 L818 619 L797 622 Z" fill="#25307a" />
<path d="M798 619 L802 609 L806 617 L809 608 L811 616 L806 620 Z" fill="#f0b090" />
<path d="M810 610 L817 608 L817 617 L811 618 Z" fill="#7ec0f0" />
<path d="M801 612 L805 608 L808 613 L804 618 Z" fill="#e05a38" />
<g stroke="#f4f4f4" stroke-width="0.5">
<g fill="#f4f4f4" font-family="'Liberation Sans','Noto Sans CJK SC',sans-serif" transform="translate(830.5 619.5) skewX(-14) translate(-830.5 -619.5)" aria-label="背景"><text x="830.50" y="619.50" font-size="11.60">背景</text></g>
</g>
<rect x="966.5" y="612.5" width="10" height="7" fill="none" stroke="#c8c8c8" stroke-width="1.3"/>
<path d="M968.7 612.5 V610.5 Q968.7 608.2 971.5 608.2 Q974.3 608.2 974.3 610.5 V612.5" fill="none" stroke="#c8c8c8" stroke-width="1.3"/>
<rect x="970.8" y="614.5" width="1.4" height="3" fill="#c8c8c8" />
<rect x="866" y="654" width="147" height="55" fill="#ffffff" />
<ellipse cx="938" cy="681" rx="62" ry="16" fill="#d8d8d8" filter="url(#wb)" opacity="0.85"/>
<circle cx="895.3" cy="680.6" r="13" fill="#dadada"/>
<path d="M906.8 670.4 A14.7 14.7 0 1 0 906.8 690.8" fill="none" stroke="#fcfcfc" stroke-width="4.4"/>
<path d="M887.5 672 L897 672 L902 680.5 L908.5 690 L899 690 L893 681 Z" fill="#fbfbfb" />
<path d="M887 688 Q893 674 913 669 Q901 677.5 897.5 687.5 Q892 686.5 887 688 Z" fill="#f6b32a" />
<g filter="url(#ws)" opacity="0.5">
<g fill="#8a8a8a" font-family="'Liberation Sans','Noto Sans CJK SC',sans-serif" aria-label="创新互联"><text x="919.30" y="686.80" font-size="20.50" letter-spacing="0.2">创新互联</text></g>
</g>
<g stroke="#ffffff" stroke-width="0.57" stroke-linejoin="round">
<g fill="#ffffff" font-family="'Liberation Sans','Noto Sans CJK SC',sans-serif" aria-label="创新互联"><text x="918.70" y="686.20" font-size="20.50" letter-spacing="0.2">创新互联</text></g>
</g>
<g fill="#f3f3f3" font-family="Liberation Sans" aria-label="CHUANG XIN HU LIAN"><text xml:space="preserve" x="919.00" y="695.00" font-size="6.60" font-weight="normal" letter-spacing="0.55">CHUANG XIN HU LIAN</text></g>
</svg>
</body></html>
